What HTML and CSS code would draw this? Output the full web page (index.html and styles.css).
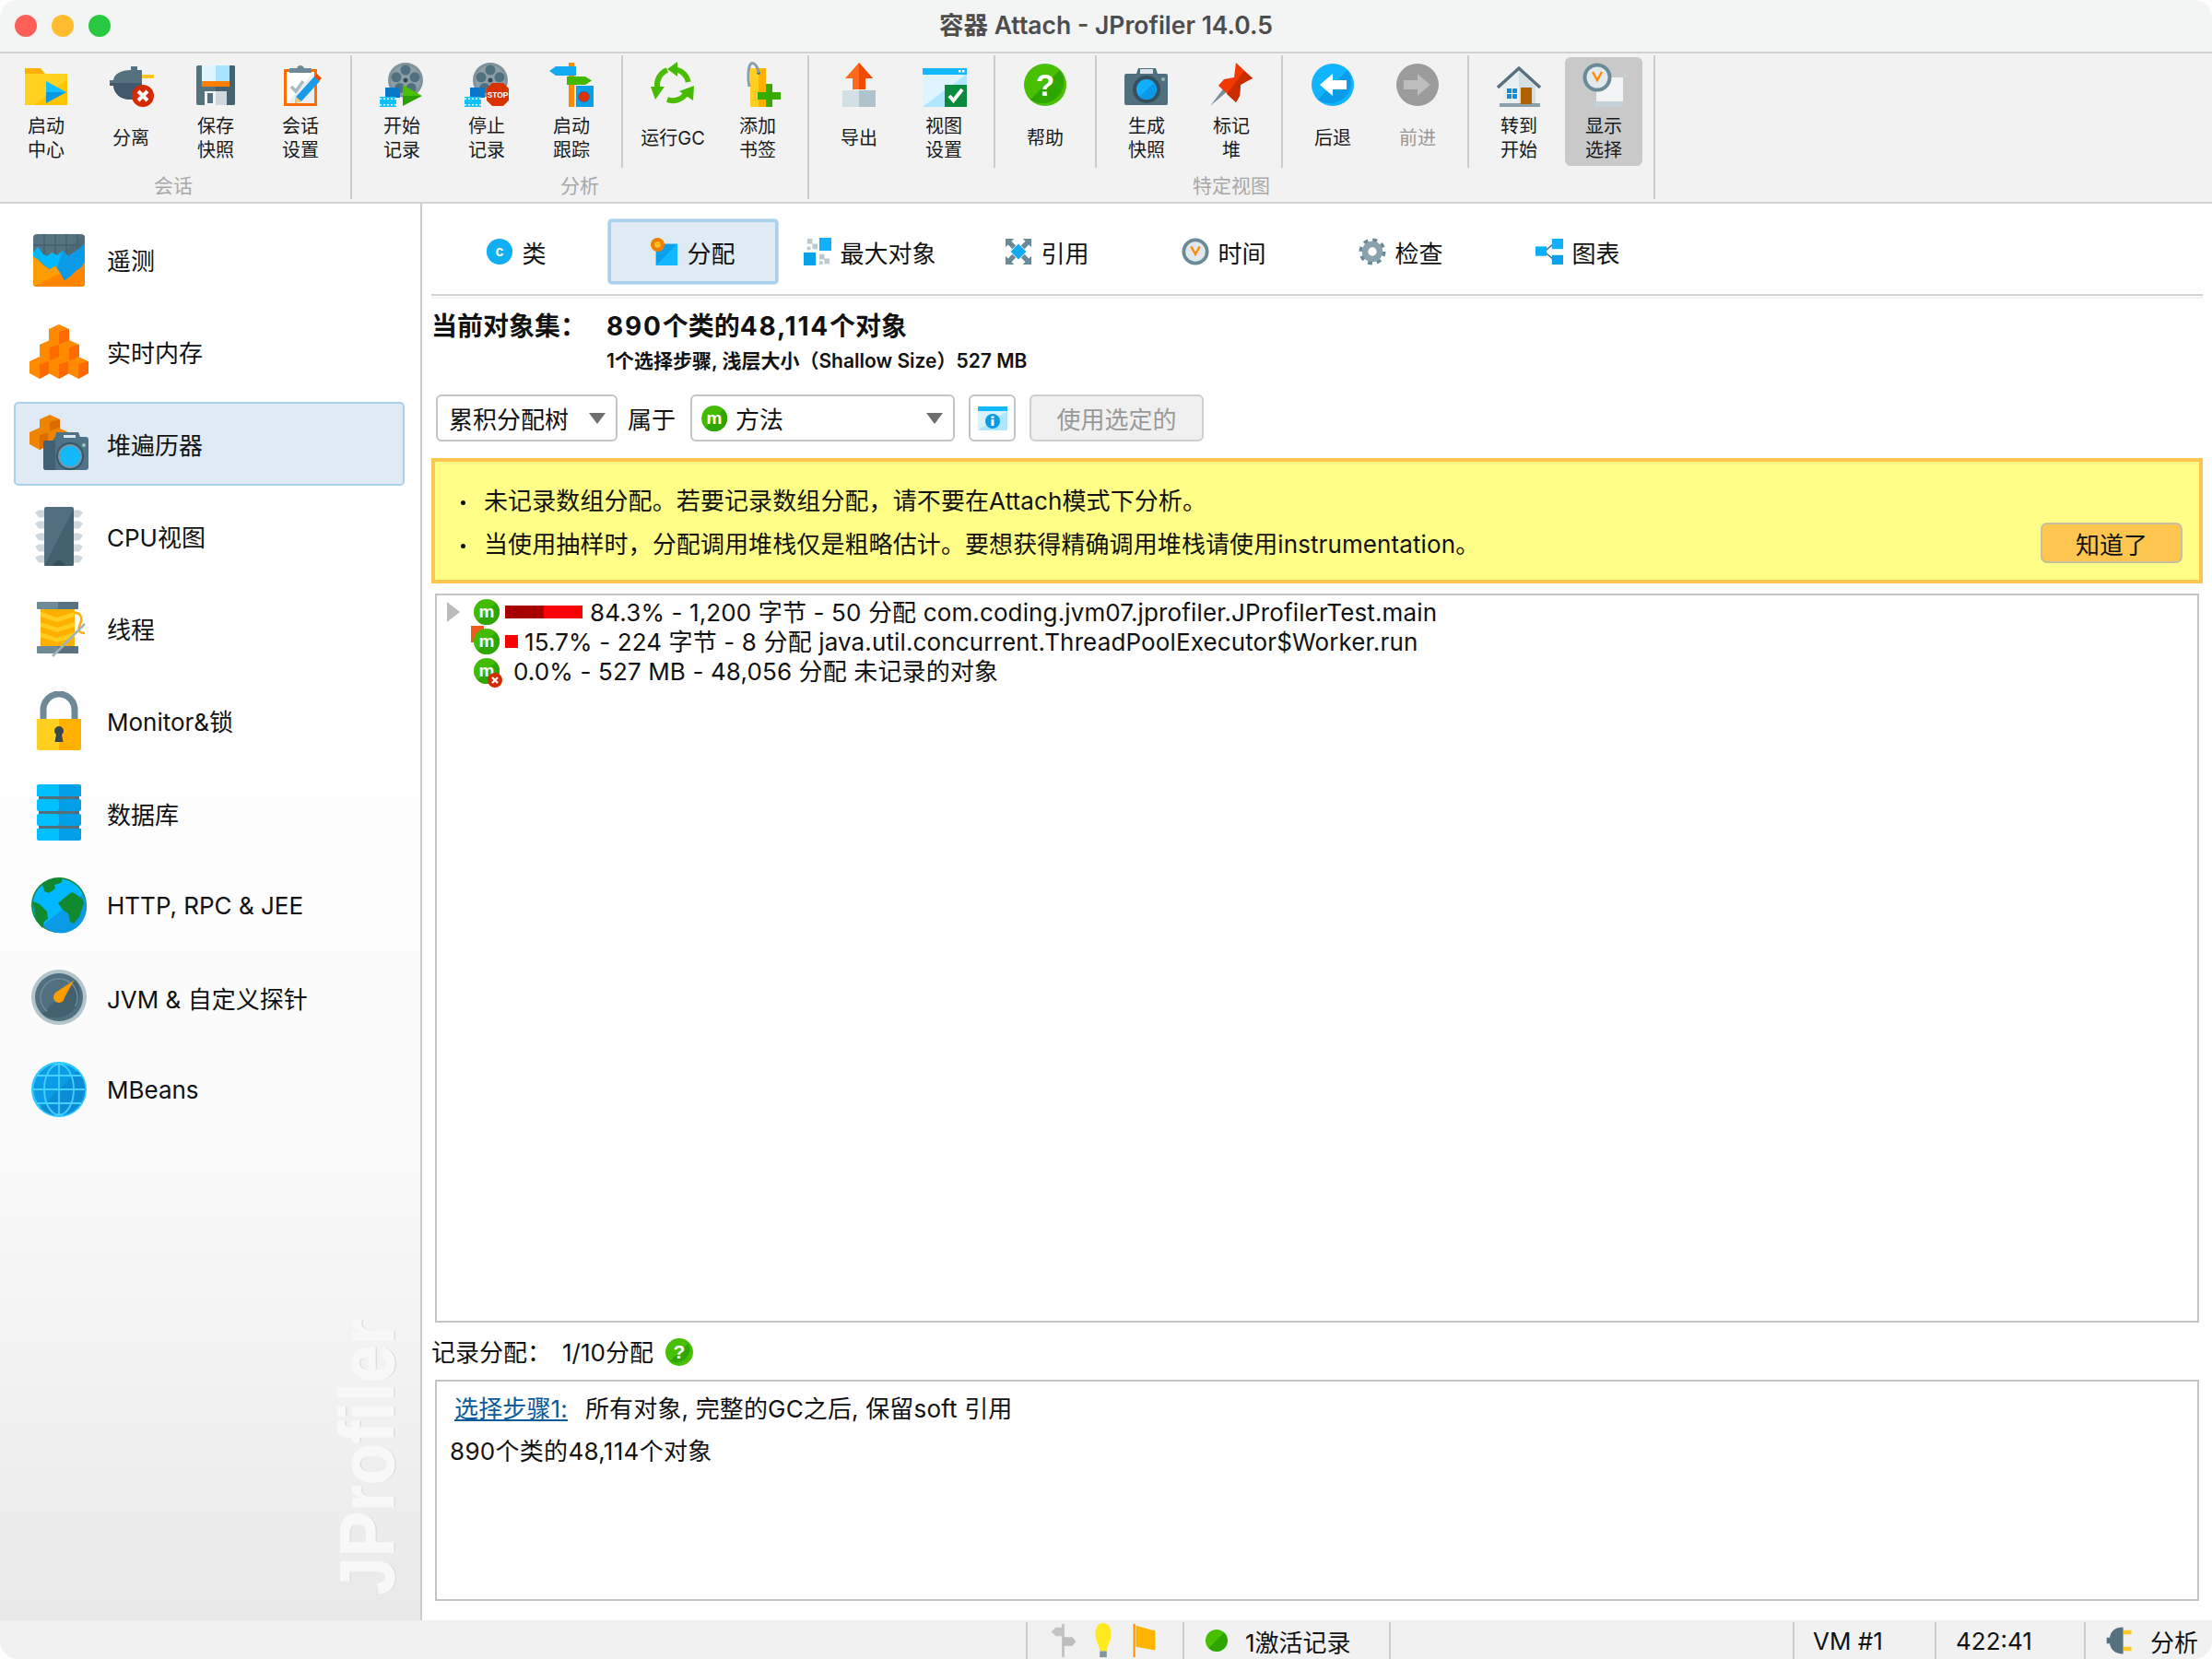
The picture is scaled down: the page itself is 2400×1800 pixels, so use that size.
FILE: index.html
```html
<!DOCTYPE html>
<html lang="zh-CN">
<head>
<meta charset="utf-8">
<title>容器 Attach - JProfiler 14.0.5</title>
<link rel="stylesheet" href="styles.css">
</head>
<body>
<svg class="defs" xmlns="http://www.w3.org/2000/svg">
  <symbol id="m" viewBox="0 0 28 28">
    <circle cx="14" cy="14" r="14" fill="#44bb00"/>
    <path d="M24 4A14 14 0 0 1 4 24z" fill="#2fa500"/>
    <text x="14" y="20" text-anchor="middle" font-family="Liberation Sans" font-weight="700" font-size="19" fill="#fff">m</text>
  </symbol>
  <symbol id="reel" viewBox="0 0 64 52">
    <circle cx="36" cy="21" r="19" fill="#7f929c"/>
    <circle cx="36" cy="21" r="16" fill="#8d9ea7"/>
    <g fill="#50707f">
      <circle cx="36" cy="10" r="5.5"/><circle cx="46" cy="17.8" r="5.5"/><circle cx="42.2" cy="29.5" r="5.5"/><circle cx="29.8" cy="29.5" r="5.5"/><circle cx="26" cy="17.8" r="5.5"/>
    </g>
    <circle cx="36" cy="21" r="2.5" fill="#37474f"/>
    <rect x="14" y="29" width="16" height="11" fill="#0a78c8"/>
    <rect x="8" y="39" width="18" height="11" fill="#10c0ff"/>
    <path d="M8 41.2h18M8 47.8h18" stroke="#e8f8ff" stroke-width="1.6" stroke-dasharray="2 2"/>
  </symbol>
  <symbol id="cube" viewBox="0 0 24 24">
    <path d="M12 0 23 5V18L12 24 1 18V5z" fill="#ff8a00"/>
    <path d="M12 8 23 5V18L12 24z" fill="#ff6a00"/>
  </symbol>
  <symbol id="cubed" viewBox="0 0 24 24">
    <path d="M12 0 23 5V18L12 24 1 18V5z" fill="#ee8400"/>
    <path d="M12 8 23 5V18L12 24z" fill="#dc6c00"/>
  </symbol>
  <symbol id="clock" viewBox="0 0 32 32">
    <circle cx="16" cy="16" r="15.5" fill="#6a8a98"/>
    <circle cx="16" cy="16" r="11.5" fill="#e2e9ec"/>
    <path d="M11 10 16 19 21 10" fill="none" stroke="#ff8a00" stroke-width="2.4"/>
  </symbol>
</svg>

<div class="window">
  <header class="titlebar">
    <div class="lights"><span class="light red"></span><span class="light amber"></span><span class="light green"></span></div>
    <div class="title">容器 Attach - JProfiler 14.0.5</div>
    <div class="title-end"></div>
  </header>

  <nav class="toolbar">
    <section class="group">
      <div class="group-items">
        <div class="tool"><svg class="tool-icon" viewBox="0 0 64 52"><path d="M9 8h17l5 6h24v6H9z" fill="#ffb000"/><rect x="9" y="14" width="46" height="34" fill="#ffd21f"/><path d="M55 20v28H19z" fill="#ffc400"/><path d="M32 22 54 34H32z" fill="#12c0ff"/><path d="M32 34H54L32 46z" fill="#0a98e6"/></svg><div class="tool-label">启动<br>中心</div></div>
        <div class="tool"><svg class="tool-icon" viewBox="0 0 64 52"><path d="M44 15h13v4H44z" fill="#ffc81f" /><path d="M9 21h4c1-7 8-11 19-11V6h7v4h5v28H39v4h-7C21 42 14 36 13 27H9z" fill="#55707e"/><path d="M9 24h35v14H39v4h-7C21 42 14 36 13 27H9z" fill="#41596a"/><circle cx="45" cy="38" r="12" fill="#d42a00"/><path d="M40 33 50 43M50 33 40 43" stroke="#fff" stroke-width="4"/></svg><div class="tool-label">分离</div></div>
        <div class="tool"><svg class="tool-icon" viewBox="0 0 64 52"><path d="M13 5H51a2 2 0 0 1 2 2V46a2 2 0 0 1-2 2H13a2 2 0 0 1-2-2V7a2 2 0 0 1 2-2z" fill="#55727f"/><path d="M32 5H51a2 2 0 0 1 2 2V46a2 2 0 0 1-2 2H32z" fill="#466270"/><rect x="17" y="5" width="15" height="17" fill="#def4ff"/><rect x="32" y="5" width="15" height="17" fill="#a8e4ff"/><rect x="17" y="22" width="30" height="6" fill="#ff8000"/><rect x="20" y="33" width="24" height="15" fill="#f2f5f7"/><rect x="32" y="33" width="12" height="15" fill="#cfd8dc"/><rect x="23" y="35" width="6" height="11" fill="#55727f"/></svg><div class="tool-label">保存<br>快照</div></div>
        <div class="tool"><svg class="tool-icon" viewBox="0 0 64 52"><rect x="15.500" y="10.500" width="33" height="37" fill="#fff" stroke="#ff6d00" stroke-width="3"/><path d="M17 46 47 12V46z" fill="#eceff1"/><path d="M20 13V8h8c1-4 7-4 8 0h8v5z" fill="#6d8a99"/><path d="M22 28l5 5 8-11" fill="none" stroke="#a9bac2" stroke-width="3.500"/><path d="M27 39 47 17l6 5-20 22-7 2z" fill="#1a9be8"/><path d="M47 17l3-3 5 5-3 3z" fill="#f04a00"/><path d="M27 39l6 5-7 2z" fill="#ffc870"/></svg><div class="tool-label">会话<br>设置</div></div>
      </div>
      <div class="group-label">会话</div>
    </section>
    <section class="group">
      <div class="group-items">
        <div class="tool"><svg class="tool-icon" viewBox="0 0 64 52"><use href="#reel"/><path d="M33 26 54 38H33z" fill="#48bf00"/><path d="M33 38H54L33 49z" fill="#2aa000"/></svg><div class="tool-label">开始<br>记录</div></div>
        <div class="tool"><svg class="tool-icon" viewBox="0 0 64 52"><use href="#reel"/><path d="M38 24h12l6 6v13l-6 6H38l-6-6V30z" fill="#d83200"/><text x="44" y="40" text-anchor="middle" font-family="Liberation Sans" font-weight="700" font-size="8.500" fill="#fff">STOP</text></svg><div class="tool-label">停止<br>记录</div></div>
        <div class="tool"><svg class="tool-icon" viewBox="0 0 64 52"><rect x="29" y="2" width="6" height="48" fill="#ff8a00"/><path d="M8 11l7-5H37V16H15z" fill="#10aaf0"/><path d="M27 17H47l7 4.500L47 26H27z" fill="#44b800"/><rect x="37" y="27" width="19" height="23" fill="#0aa0e8"/><circle cx="45.500" cy="39" r="6" fill="#e03000" stroke="#0a7cc0"/></svg><div class="tool-label">启动<br>跟踪</div></div>
        <div class="subsep"></div>
        <div class="tool"><svg class="tool-icon" viewBox="0 0 64 52"><g fill="none" stroke="#4cbc00" stroke-width="6"><path d="M48.700 23A17 17 0 0 0 36.400 9.600"/><path d="M26 42A17 17 0 0 0 46 36"/><path d="M26 10A17 17 0 0 0 15.300 29"/></g><path d="M37 1V17L26 9z" fill="#44bb00"/><path d="M39 33 55 27 54 43z" fill="#44bb00"/><path d="M8 28 23 28 13 42z" fill="#44bb00"/></svg><div class="tool-label">运行GC</div></div>
        <div class="tool"><svg class="tool-icon" viewBox="0 0 64 52"><rect x="24" y="8" width="17" height="42" fill="#ffd020"/><rect x="33" y="8" width="8" height="42" fill="#ffb000"/><circle cx="33" cy="13" r="2" fill="#55707e"/><path d="M33 13C32 4 26 0 24 4c-2 4-3 14-1 24" fill="none" stroke="#8ba0aa" stroke-width="3"/><rect x="41" y="25" width="7" height="25" fill="#35ad00"/><rect x="32" y="34" width="25" height="8" fill="#35ad00"/></svg><div class="tool-label">添加<br>书签</div></div>
      </div>
      <div class="group-label">分析</div>
    </section>
    <section class="group">
      <div class="group-items">
        <div class="tool"><svg class="tool-icon" viewBox="0 0 64 52"><path d="M32 2 47 19H39V31H25V19H17z" fill="#ff6a1a"/><path d="M32 2 47 19H39V31H32z" fill="#f04a00"/><rect x="14" y="32" width="18" height="18" fill="#d2dfe4"/><rect x="32" y="32" width="18" height="18" fill="#aec3cc"/></svg><div class="tool-label">导出</div></div>
        <div class="tool"><svg class="tool-icon" viewBox="0 0 64 52"><rect x="9" y="8" width="48" height="42" fill="#def5ff"/><path d="M57 14V50H9z" fill="#b0e6ff"/><rect x="9" y="8" width="48" height="7" fill="#12b8ff"/><path d="M48 10h2.500v2.500H48zM52 10h2.500v2.500H52z" fill="#fff"/><rect x="33" y="26" width="24" height="24" fill="#0a8a3c"/><path d="M38 38l4.500 5L52 31" fill="none" stroke="#fff" stroke-width="4"/></svg><div class="tool-label">视图<br>设置</div></div>
        <div class="subsep"></div>
        <div class="tool"><svg class="tool-icon" viewBox="0 0 64 52"><circle cx="32" cy="26" r="23" fill="#48bf00"/><path d="M48 10A23 23 0 0 1 16 42z" fill="#2ea600"/><text x="32" y="38" text-anchor="middle" font-family="Liberation Sans" font-weight="700" font-size="33" fill="#fff">?</text></svg><div class="tool-label">帮助</div></div>
        <div class="subsep"></div>
        <div class="tool"><svg class="tool-icon" viewBox="0 0 64 52"><path d="M10 14h11l2-6h19l2 6h9a2 2 0 0 1 2 2V46a2 2 0 0 1-2 2H10a2 2 0 0 1-2-2V16a2 2 0 0 1 2-2z" fill="#4f6f7e"/><rect x="25" y="9" width="14" height="5" fill="#dde7eb"/><circle cx="32" cy="31" r="15" fill="#34505e"/><circle cx="32" cy="31" r="11" fill="#12b0fa"/><path d="M40 24A11 11 0 0 1 24 39z" fill="#0a98e8"/><circle cx="50" cy="20" r="2" fill="#9fb3bd"/></svg><div class="tool-label">生成<br>快照</div></div>
        <div class="tool"><svg class="tool-icon" viewBox="0 0 64 52"><path d="M9 49 25 28l4 4z" fill="#78909c"/><path d="M37 2 55 19l-6 3-7 4-1 12-4 7L28 36 18 27l6-7 11-2 1-8z" fill="#f03800"/><path d="M46 11l9 8-6 3-7 4-1 12-4 7-10-9z" fill="#c82c00"/></svg><div class="tool-label">标记<br>堆</div></div>
        <div class="subsep"></div>
        <div class="tool"><svg class="tool-icon" viewBox="0 0 64 52"><circle cx="32" cy="26" r="23" fill="#10b4ff"/><path d="M48 10A23 23 0 0 1 16 42z" fill="#0a9ce8"/><path d="M18 26 32 14V21H47V31H32V38z" fill="#fff"/></svg><div class="tool-label">后退</div></div>
        <div class="tool is-off"><svg class="tool-icon" viewBox="0 0 64 52"><circle cx="32" cy="26" r="23" fill="#9b9b9b"/><path d="M46 26 32 14V21H17V31H32V38z" fill="#bdbdbd"/></svg><div class="tool-label">前进</div></div>
        <div class="subsep"></div>
        <div class="tool"><svg class="tool-icon" viewBox="0 0 64 52"><path d="M14 28 32 11 50 28V47H14z" fill="#e8eff2"/><path d="M32 11 50 28V47H32z" fill="#d5e0e5"/><path d="M9 29 32 8 55 29" fill="none" stroke="#55707e" stroke-width="3.500"/><rect x="11" y="46" width="44" height="4" fill="#8aa0aa"/><rect x="34" y="29" width="12" height="18" fill="#b06000"/><rect x="19" y="30" width="11" height="11" fill="#0a8ee0"/><path d="M24.500 30v11M19 35.500h11" stroke="#fff"/></svg><div class="tool-label">转到<br>开始</div></div>
        <div class="tool is-on"><svg class="tool-icon" viewBox="0 0 64 52"><path d="M24 18H53V50H24z" fill="#f2f4f5"/><path d="M53 14a4 4 0 0 1 4 4H53zM22 44H53V50H22z" fill="#c3d2d9"/><svg x="9" y="2" width="32" height="32" viewBox="0 0 32 32"><use href="#clock"/></svg></svg><div class="tool-label">显示<br>选择</div></div>
      </div>
      <div class="group-label">特定视图</div>
    </section>
  </nav>

  <div class="main">
    <aside class="sidebar">
      <div class="side-item"><svg class="side-icon" viewBox="0 0 64 64"><defs><clipPath id="tel"><rect x="4" y="4" width="56" height="57" rx="4"/></clipPath></defs><g clip-path="url(#tel)"><rect x="4" y="4" width="56" height="57" fill="#557280"/><path d="M16 4V30M28 4V30M40 4V30M52 4V30M4 16H60" stroke="#45606d" stroke-width="1.500"/><path d="M60 4V30H30z" fill="#4a6572" opacity=".6"/><path d="M4 61V28L10 32 16 38 22 42 28 38 34 47 38 54 44 50 50 44 56 40 60 34V61z" fill="#ff9c00"/><path d="M60 34V61H4z" fill="#ff8400"/><path d="M4 24 9 18 14 25 19 28 24 24 30 27 36 22 42 28 48 24 54 20 60 14V34L56 40 50 44 44 50 38 54 34 47 28 38 22 42 16 38 10 32 4 28z" fill="#00b8ff"/><path d="M60 14V34L56 40 50 44 44 50 38 54 30 40 36 22 42 28 48 24 54 20z" fill="#0a9ae6"/></g></svg><span>遥测</span></div>
      <div class="side-item"><svg class="side-icon" viewBox="0 0 64 64"><use href="#cube" x="20" y="2" width="24" height="24"/><use href="#cube" x="10" y="19" width="24" height="24"/><use href="#cube" x="31" y="19" width="24" height="24"/><use href="#cube" x="-1" y="37" width="24" height="24"/><use href="#cube" x="20" y="37" width="24" height="24"/><use href="#cube" x="41" y="37" width="24" height="24"/></svg><span>实时内存</span></div>
      <div class="side-item is-active"><svg class="side-icon" viewBox="0 0 64 64"><use href="#cubed" x="10" y="0" width="24" height="24"/><use href="#cubed" x="-1" y="14" width="24" height="24"/><use href="#cubed" x="19" y="14" width="24" height="24"/><path d="M18 28h7l3-4 1-5h24l2 5h6a3 3 0 0 1 3 3V57a3 3 0 0 1-3 3H18a3 3 0 0 1-3-3V31a3 3 0 0 1 3-3z" fill="#4f7386"/><path d="M18 28h10V60H18a3 3 0 0 1-3-3V31a3 3 0 0 1 3-3z" fill="#3f6173"/><rect x="37" y="22" width="13" height="3" fill="#dfe9ed"/><circle cx="44" cy="45" r="15" fill="#37566a"/><circle cx="44" cy="45" r="13" fill="#7a97a5"/><circle cx="44" cy="45" r="11" fill="#12b8fa"/><circle cx="59" cy="33" r="2" fill="#a9bdc6"/></svg><span>堆遍历器</span></div>
      <div class="side-item"><svg class="side-icon" viewBox="0 0 64 64"><g fill="#cfd8dc"><path d="M6 6l4-2.500h6v8h-6zM6 18l4-2.500h6v8h-6zM6 31l4-2.500h6v8h-6zM6 43l4-2.500h6v8h-6zM6 55l4-2.500h6v8h-6z"/><path d="M58 6l-4-2.500h-6v8h6zM58 18l-4-2.500h-6v8h6zM58 31l-4-2.500h-6v8h6zM58 43l-4-2.500h-6v8h6zM58 55l-4-2.500h-6v8h6z"/></g><rect x="16" y="0" width="32" height="64" rx="2" fill="#51707f"/><path d="M48 2V62a2 2 0 0 1-2 2H16z" fill="#42606e"/><path d="M26 64a6 6 0 0 1 12 0z" fill="#37505c"/></svg><span>CPU视图</span></div>
      <div class="side-item"><svg class="side-icon" viewBox="0 0 64 64"><rect x="12" y="9" width="37" height="44" fill="#ffb000"/><g fill="#ffcc20"><path d="M12 14 30 20 49 14V19L30 25 12 19z"/><path d="M12 25 30 31 49 25V30L30 36 12 30z"/><path d="M12 36 30 42 49 36V41L30 47 12 41z"/></g><rect x="8" y="3" width="45" height="8" rx="1" fill="#6e8a97"/><rect x="31" y="3" width="22" height="8" fill="#587280"/><rect x="8" y="51" width="45" height="8" rx="1" fill="#6e8a97"/><rect x="31" y="51" width="22" height="8" fill="#587280"/><path d="M48 15c7-1 10 5 7 12s-1 10 5 10" fill="none" stroke="#ffb000" stroke-width="2.500"/><path d="M25 62 60 27" stroke="#a4b3ba" stroke-width="2.500"/></svg><span>线程</span></div>
      <div class="side-item"><svg class="side-icon" viewBox="0 0 64 64"><path d="M15 32V20a17 17 0 0 1 34 0V32" fill="none" stroke="#6e8a97" stroke-width="7"/><path d="M32 30H8v32a2 2 0 0 0 2 2H32z" fill="#ffd020"/><path d="M32 30H56v32a2 2 0 0 1-2 2H32z" fill="#ffb000"/><circle cx="32" cy="43" r="5" fill="#37474f"/><path d="M29.500 44h5l2 11h-9z" fill="#37474f"/></svg><span>Monitor&amp;锁</span></div>
      <div class="side-item"><svg class="side-icon" viewBox="0 0 64 64"><rect x="10" y="12" width="44" height="40" fill="#546e7a"/><g fill="#00c0ff"><path d="M10 1H32V14H8V3a2 2 0 0 1 2-2z"/><rect x="8" y="17" width="24" height="13" rx="2"/><rect x="8" y="33" width="24" height="13" rx="2"/><path d="M8 49H32V62H10a2 2 0 0 1-2-2z"/></g><g fill="#009fe8"><path d="M32 1H54a2 2 0 0 1 2 2V14H32z"/><rect x="32" y="17" width="24" height="13" rx="2"/><rect x="32" y="33" width="24" height="13" rx="2"/><path d="M32 49H56V60a2 2 0 0 1-2 2H32z"/></g></svg><span>数据库</span></div>
      <div class="side-item"><svg class="side-icon" viewBox="0 0 64 64"><circle cx="32" cy="32" r="30" fill="#108a30"/><circle cx="32" cy="32" r="28.500" fill="#00b8ff"/><path d="M14 54A28 28 0 0 0 58 20z" fill="#0a9ae6"/><path d="M14 10c6-6 15-8 22-7l-2 5-7 2 1 4-7 5-5-2zM4 28l7 3 8 8 1 8-4 3-2 7C8 50 4 40 4 28zM38 24l8-6 4 2 8 6 1 4-5 15-6 7-4-2-2-9-6-4-5-7z" fill="#10892f"/></svg><span>HTTP, RPC &amp; JEE</span></div>
      <div class="side-item"><svg class="side-icon" viewBox="0 0 64 64"><circle cx="32" cy="32" r="30" fill="#b4c4cb"/><circle cx="32" cy="32" r="26" fill="#50707f"/><path d="M50 14A26 26 0 0 1 14 50z" fill="#42606e"/><circle cx="32" cy="32" r="20" fill="none" stroke="#6e8a97" stroke-width="1.500" stroke-dasharray="90 36" transform="rotate(130 32 32)"/><path d="M28 27 48 14 36 36z" fill="#ff9c00"/><circle cx="32" cy="32" r="6" fill="#ff9c00"/></svg><span>JVM &amp; 自定义探针</span></div>
      <div class="side-item"><svg class="side-icon" viewBox="0 0 64 64"><circle cx="32" cy="32" r="30" fill="#2cc8ff"/><circle cx="32" cy="32" r="27.500" fill="#0a9ce6"/><path d="M52 12A27.500 27.500 0 0 1 12 52z" fill="#0a8cd6"/><g fill="none" stroke="#46d0ff" stroke-width="1.800"><ellipse cx="32" cy="32" rx="16" ry="27.500"/><path d="M32 4V60M4 32H60M8 17H56M8 47H56"/></g></svg><span>MBeans</span></div>
      <div class="brand">JProfiler</div>
    </aside>

    <main class="content">
      <div class="tabs">
        <div class="tab"><svg class="tab-icon" viewBox="0 0 32 32"><circle cx="16" cy="16" r="15" fill="#10aff4"/><text x="16" y="21.500" text-anchor="middle" font-family="Liberation Sans" font-weight="700" font-size="17" fill="#fff">c</text></svg>类</div>
        <div class="tab is-active"><svg class="tab-icon" viewBox="0 0 32 32"><rect x="6" y="7" width="25" height="25" fill="#0aa0ea"/><path d="M31 7V32H6z" fill="#12b8ff"/><circle cx="8" cy="8" r="8" fill="#f08000"/><circle cx="8" cy="8" r="3.500" fill="#ffc020"/></svg>分配</div>
        <div class="tab"><svg class="tab-icon" viewBox="0 0 32 32"><rect x="18" y="0" width="14" height="15" fill="#12b0f8"/><rect x="0" y="17" width="14" height="15" fill="#0aa0ea"/><path d="M4 1h6v6H4zM10 7h6v6h-6zM4 10h4v4H4zM18 19h6v6h-6zM24 24h6v6h-6zM18 27h4v4h-4z" fill="#bccad0"/></svg>最大对象</div>
        <div class="tab"><svg class="tab-icon" viewBox="0 0 32 32"><path d="M16 7 25 16 16 25 7 16z" fill="#12aaf2"/><path d="M1 1H11L8 4 13 9 9 13 4 8 1 11zM31 1V11L28 8 23 13 19 9 24 4 21 1zM1 31V21L4 24 9 19 13 23 8 28 11 31zM31 31H21L24 28 19 23 23 19 28 24 31 21z" fill="#6a8a98"/></svg>引用</div>
        <div class="tab"><svg class="tab-icon" viewBox="0 0 32 32"><use href="#clock"/></svg>时间</div>
        <div class="tab"><svg class="tab-icon" viewBox="0 0 32 32"><circle cx="16" cy="16" r="13" fill="none" stroke="#6a8a98" stroke-width="5" stroke-dasharray="5 5.200"/><circle cx="16" cy="16" r="8.500" fill="none" stroke="#8aa2ae" stroke-width="7"/></svg>检查</div>
        <div class="tab"><svg class="tab-icon" viewBox="0 0 32 32"><path d="M10 16 22 6M10 16 22 26" stroke="#4c6a78" stroke-width="1.500"/><rect x="0" y="10" width="13" height="11" fill="#0ab0f8"/><rect x="19" y="1" width="13" height="12" fill="#12b0f8"/><rect x="19" y="20" width="13" height="11" fill="#0aa0ea"/></svg>图表</div>
      </div>

      <div class="headline"><div class="headline-key">当前对象集：</div><div class="headline-value"><span class="num">890</span>个类的<span class="num">48,114</span>个对象</div></div>
      <div class="subline">1个选择步骤, 浅层大小（Shallow Size）527 MB</div>

      <div class="controls">
        <div class="combo combo-view"><span>累积分配树</span><i class="caret"></i></div>
        <span class="ctl-label">属于</span>
        <div class="combo combo-scope"><svg class="m-icon"><use href="#m"/></svg><span>方法</span><i class="caret"></i></div>
        <div class="icon-btn"><svg class="info-icon" viewBox="0 0 32 26"><rect width="32" height="26" fill="#d6f2ff"/><path d="M32 5V26H0z" fill="#b0e6ff"/><rect width="32" height="5" fill="#12b8ff"/><circle cx="16" cy="16" r="8" fill="#0a9ae6"/><rect x="14.500" y="14" width="3" height="7" fill="#fff"/><rect x="14.500" y="10.500" width="3" height="2.500" fill="#fff"/></svg></div>
        <div class="btn-off">使用选定的</div>
      </div>

      <div class="notice">
        <ul class="notice-list">
          <li>未记录数组分配。若要记录数组分配，请不要在Attach模式下分析。</li>
          <li>当使用抽样时，分配调用堆栈仅是粗略估计。要想获得精确调用堆栈请使用instrumentation。</li>
        </ul>
        <div class="notice-btn">知道了</div>
      </div>

      <div class="tree">
        <div class="tree-row"><span class="twist"><i class="arrow"></i></span><svg class="m-icon"><use href="#m"/></svg><span class="bar bar-big"><i class="bar-self"></i></span><span class="tree-text">84.3% - 1,200 字节 - 50 分配 com.coding.jvm07.jprofiler.JProfilerTest.main</span></div>
        <div class="tree-row"><span class="twist"></span><span class="m-wrap"><i class="m-flag"></i><svg class="m-icon"><use href="#m"/></svg></span><span class="bar bar-small"></span><span class="tree-text t2">15.7% - 224 字节 - 8 分配 java.util.concurrent.ThreadPoolExecutor$Worker.run</span></div>
        <div class="tree-row"><span class="twist"></span><span class="m-wrap"><svg class="m-icon"><use href="#m"/></svg><svg class="m-x" viewBox="0 0 16 16"><circle cx="8" cy="8" r="8" fill="#d42a00"/><path d="M5 5l6 6M11 5l-6 6" stroke="#fff" stroke-width="2.400"/></svg></span><span class="tree-text t3">0.0% - 527 MB - 48,056 分配 未记录的对象</span></div>
      </div>

      <div class="rate"><span class="rate-key">记录分配：</span><span class="rate-val">1/10分配</span><svg class="rate-help" viewBox="0 0 30 30"><circle cx="15" cy="15" r="15" fill="#48bf00"/><path d="M25 5A15 15 0 0 1 5 25z" fill="#2ea600"/><text x="15" y="22" text-anchor="middle" font-family="Liberation Sans" font-weight="700" font-size="21" fill="#fff">?</text></svg></div>

      <div class="steps">
        <div class="step"><a class="step-link">选择步骤1:</a><span>所有对象, 完整的GC之后, 保留soft 引用</span></div>
        <div class="step-total">890个类的48,114个对象</div>
      </div>
    </main>
  </div>

  <footer class="status">
    <div class="status-fill"></div>
    <div class="cell cell-icons"><svg class="st-sign" viewBox="0 0 30 42"><rect x="13" y="2" width="3" height="38" fill="#c4c4c4"/><path d="M1 11 6 6H15V16H6z" fill="#c4c4c4"/><path d="M14 17H25L29 22 25 27H14z" fill="#bdbdbd"/></svg><svg class="st-bulb" viewBox="0 0 22 42"><path d="M11 1c6 0 9 6 9 12 0 9-5 14-5 20H7c0-6-5-11-5-20C2 7 5 1 11 1z" fill="#ffe91f"/><rect x="7" y="33" width="8" height="7" fill="#8296a0"/></svg><svg class="st-flag" viewBox="0 0 26 42"><rect x="0" y="2" width="2" height="38" fill="#ff8a00"/><path d="M3 4 25 10V32L3 28z" fill="#ffb400"/></svg></div>
    <div class="cell cell-rec"><i class="rec-dot"></i><span>1激活记录</span></div>
    <div class="status-fill"></div>
    <div class="cell cell-vm">VM #1</div>
    <div class="cell cell-time">422:41</div>
    <div class="cell cell-mode"><svg class="st-plug" viewBox="0 0 30 34"><path d="M20 7h8v4h-8zM20 23h8v4h-8z" fill="#ffc81f"/><path d="M4 14h3c1-6 5-10 13-10V30C12 30 8 26 7 20H4z" fill="#55707e"/></svg><span>分析</span></div>
  </footer>
</div>
</body>
</html>
```

FILE: styles.css
```css
* { box-sizing: border-box; }
html, body { margin: 0; padding: 0; background: #fff; }
body { font-family: Inter, "Noto Sans CJK SC", sans-serif; color: #111; font-size: 26px; }
.defs { display: none; }
svg { display: block; flex: none; }

.window { width: 2400px; height: 1800px; display: flex; flex-direction: column; overflow: hidden; border-radius: 20px; background: #f2f2f2; }

.titlebar { height: 58px; flex: none; display: grid; grid-template-columns: 1fr auto 1fr; align-items: center; background: #f3f4f4; border-bottom: 2px solid #d2d2d2; }
.lights { display: flex; gap: 16px; padding-left: 16px; }
.light { width: 24px; height: 24px; border-radius: 50%; }
.red { background: #ff5f57; }
.amber { background: #febc2e; }
.green { background: #28c840; }
.title { font-size: 26.500px; font-weight: 600; color: #4d4d4d; padding-bottom: 5px; }

.toolbar { height: 163px; flex: none; display: flex; padding-top: 2px; background: #f2f2f2; border-bottom: 2px solid #d4d4d4; }
.group { height: 156px; padding: 0 8px; border-right: 2px solid #cdcdcd; display: flex; flex-direction: column; }
.group:first-child { padding-left: 4px; }
.group-items { display: flex; height: 122px; }
.subsep { width: 2px; height: 122px; background: #cdcdcd; margin: 0 8px; }
.group-label { height: 34px; padding-top: 6px; line-height: 28px; text-align: center; font-size: 21px; color: #a8a8a8; }
.tool { width: 84px; height: 118px; margin: 2px 4px; padding-top: 4px; border-radius: 6px; display: flex; flex-direction: column; align-items: center; }
.tool-icon { width: 64px; height: 52px; }
.tool-label { height: 52px; margin-top: 6px; display: flex; align-items: center; text-align: center; font-size: 20px; line-height: 26px; color: #1a1a1a; }
.is-off .tool-label { color: #999; }
.is-on { background: #c9c9c9; }

.main { flex: 1; display: flex; min-height: 0; background: #fff; }
.sidebar { position: relative; width: 458px; flex: none; padding-top: 15px; display: flex; flex-direction: column; gap: 9.100px; border-right: 2px solid #cbcbcb; background: linear-gradient(#fff 0%, #fff 30%, #fafafa 66%, #e9e9e9 100%); }
.side-item { height: 91px; margin: 0 17px 0 15px; padding-left: 15px; display: flex; align-items: center; gap: 20px; border: 2px solid transparent; border-radius: 5px; font-size: 26px; flex: none; }
.side-item.is-active { background: #dfeaf4; border-color: #a9d1ec; }
.side-icon { width: 64px; height: 64px; }
.brand { position: absolute; right: 16px; bottom: 7px; writing-mode: vertical-rl; transform: rotate(180deg) scaleY(.88); font-family: "Liberation Sans", sans-serif; font-weight: 700; font-size: 84px; line-height: 84px; color: #f8f8f8; -webkit-text-stroke: 1px #f8f8f8; text-shadow: 0 2px 0 #dedede; }

.content { flex: 1; min-width: 0; display: flex; flex-direction: column; padding: 17px 10px 21px; }
.tabs { display: grid; grid-template-columns: repeat(7, 192px); height: 83px; margin-left: -4px; margin-right: -4px; padding-bottom: 13px; position: relative; }
.tabs::after { content: ""; position: absolute; left: 4px; right: 4px; bottom: 0; height: 2px; background: #d2d2d2; box-shadow: 0 3px 0 #f4f4f4; }
.tab { display: flex; align-items: center; justify-content: center; gap: 9px; font-size: 26px; }
.tab.is-active { justify-self: center; width: 184px; background: #dfeaf4; border: 3px solid #a9d1ec; box-shadow: 0 0 0 1px #c8e2f3; border-radius: 4px; }
.tab-icon { width: 30px; height: 30px; }

.headline { display: flex; margin-top: 16px; padding-left: 0; line-height: 34px; font-weight: 700; font-size: 28px; }
.headline-key { width: 190px; }
.num { letter-spacing: 1.800px; }
.subline { margin: 8px 0 0 190px; line-height: 26px; font-size: 21px; font-weight: 600; }

.controls { display: flex; align-items: center; height: 51px; margin-top: 23px; padding-left: 5px; }
.combo { height: 51px; position: relative; display: flex; align-items: center; background: #fff; border: 2px solid #c4c4c4; border-radius: 6px; }
.combo-view { width: 197px; padding-left: 12px; }
.combo-scope { width: 287px; padding-left: 10px; gap: 9px; }
.caret { position: absolute; right: 11px; top: 18px; width: 0; height: 0; border: 9px solid transparent; border-top: 12px solid #6e6e6e; border-bottom: 0; }
.ctl-label { width: 79px; padding-left: 11px; }
.m-icon { width: 28px; height: 28px; }
.icon-btn { width: 51px; height: 51px; margin-left: 15px; display: flex; align-items: center; justify-content: center; border: 2px solid #c4c4c4; border-radius: 6px; background: #fff; }
.info-icon { width: 32px; height: 26px; }
.btn-off { width: 189px; height: 51px; margin-left: 15px; display: flex; align-items: center; justify-content: center; color: #999; background: #f0f0f0; border: 2px solid #cfcfcf; border-radius: 6px; }

.notice { height: 136px; flex: none; margin-top: 18px; display: flex; justify-content: space-between; background: #ffff88; border: 4px solid #ffc64f; }
.notice-list { list-style: none; margin: 0; padding: 30px 0 0 53px; letter-spacing: .1px; }
.notice-list li { position: relative; line-height: 26px; margin-bottom: 21px; }
.notice-list li::before { content: ""; position: absolute; left: -25px; top: 12px; width: 5px; height: 5px; border-radius: 50%; background: #111; }
.notice-btn { align-self: flex-end; width: 154px; height: 44px; margin: 0 18px 18px 0; display: flex; align-items: center; justify-content: center; background: #ffc64f; border: 2px solid #c4c0a0; border-radius: 7px; }

.tree { flex: 1; min-height: 0; margin: 11px 4px 0; padding-top: 2px; background: #fff; border: 2px solid #c4c4c4; }
.tree-row { height: 32px; display: flex; align-items: center; white-space: nowrap; }
.twist { width: 40px; flex: none; display: flex; justify-content: center; padding-right: 4px; }
.arrow { width: 0; height: 0; border-left: 14px solid #bbb; border-top: 11px solid transparent; border-bottom: 11px solid transparent; }
.m-wrap { position: relative; width: 28px; height: 28px; flex: none; }
.m-flag { position: absolute; left: -3px; top: -3px; width: 14px; height: 18px; background: #f05a1a; }
.m-wrap .m-icon { position: relative; }
.m-x { position: absolute; right: -3px; bottom: -4px; width: 16px; height: 16px; }
.bar { height: 14px; margin-left: 6px; background: #ff0000; flex: none; }
.bar-big { width: 84px; margin-right: 8px; }
.bar-self { display: block; width: 42px; height: 14px; background: #a80000; }
.bar-small { width: 14px; margin-right: 7px; }
.tree-text { letter-spacing: .13px; padding-bottom: 3px; }
.tree-text.t3 { margin-left: 15px; }

.rate { display: flex; align-items: center; height: 32px; margin: 16px 0 0 0; }
.rate-key { width: 142px; padding-bottom: 3px; }
.rate-val { padding-bottom: 3px; }
.rate-help { width: 30px; height: 30px; margin-left: 13px; }

.steps { height: 240px; flex: none; margin: 14px 4px 0; padding: 15px 0 0 14px; background: #fff; border: 2px solid #c4c4c4; letter-spacing: .15px; }
.step { display: flex; line-height: 30px; padding-left: 5px; gap: 19px; }
.step-link { color: #0b5a9e; text-decoration: underline; }
.step-total { margin-top: 16px; line-height: 30px; letter-spacing: .3px; }

.status { height: 42px; flex: none; display: flex; background: #f1f1f1; padding-top: 2px; }
.status-fill { flex: 1; }
.cell { height: 40px; display: flex; align-items: center; border-left: 2px solid #cdcdcd; }
.status-fill:first-child { flex: none; width: 1113px; }
.cell-icons { width: 170px; padding-left: 24px; gap: 17px; }
.cell-rec { width: 226px; padding-left: 23px; gap: 19px; border-right: 2px solid #cdcdcd; }
.rec-dot { width: 24px; height: 24px; border-radius: 50%; background: linear-gradient(135deg, #48bf00 50%, #2ea600 50%); }
.status-fill:nth-child(4) { flex: none; width: 436px; }
.cell-vm { width: 154px; padding-left: 20px; }
.cell-time { width: 162px; padding-left: 21px; }
.cell-mode { flex: 1; padding-left: 18px; gap: 18px; }
.st-sign { width: 30px; height: 40px; }
.st-bulb { width: 22px; height: 40px; }
.st-flag { width: 26px; height: 40px; margin-left: 4px; }
.st-plug { width: 34px; height: 38px; }
```
